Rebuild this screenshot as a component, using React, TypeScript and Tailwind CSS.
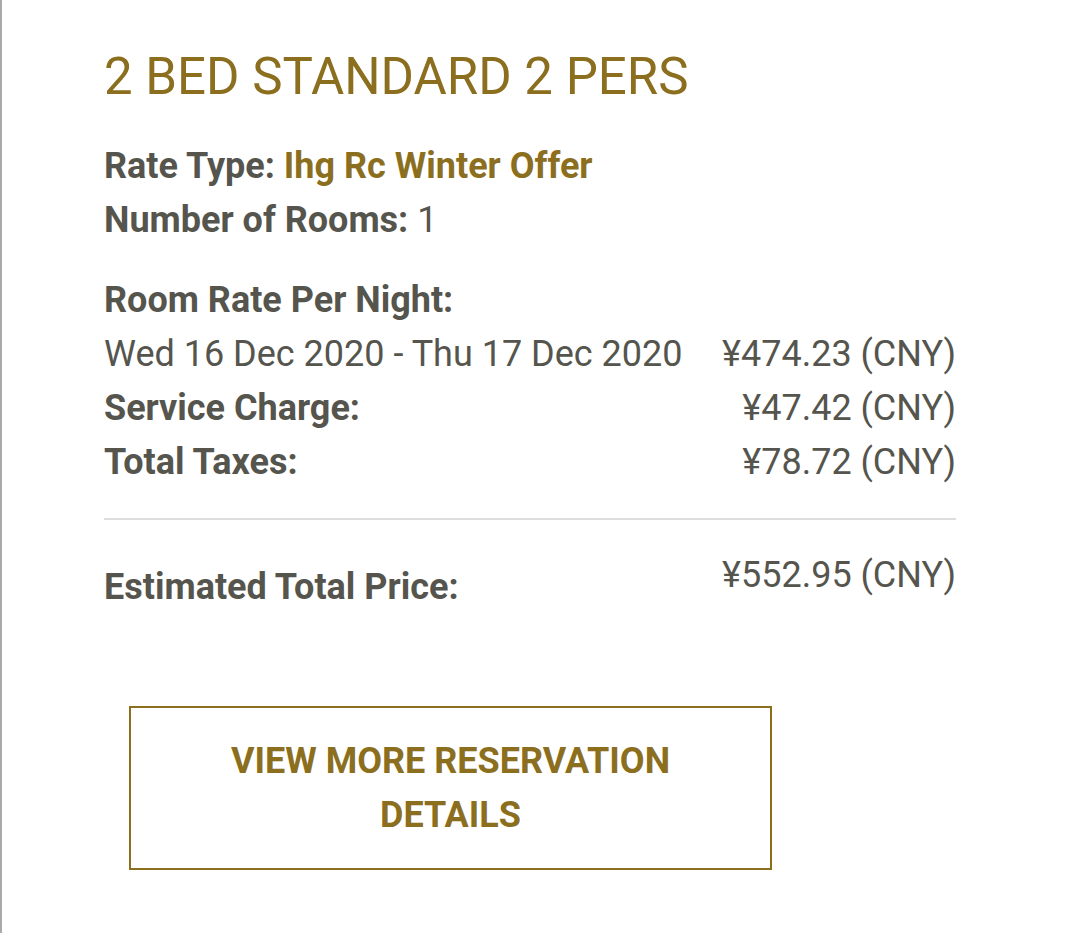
const rows = [
  { label: "Service Charge:", value: "¥47.42 (CNY)" },
  { label: "Total Taxes:", value: "¥78.72 (CNY)" },
];

const App = () => {
  return (
    <div className="w-[1080px] h-[933px] bg-white border-l-2 border-[#a9a9a9] overflow-hidden font-['Roboto',sans-serif] text-[#55554e]">
      <div className="ml-[102px] w-[852px] pt-[47px]">
        <h1 className="text-[51px] leading-[60px] text-[#8b6f1f] font-normal">2 BED STANDARD 2 PERS</h1>

        <div className="mt-[32px] text-[36px] leading-[54px]">
          <p>
            <span className="font-bold">Rate Type: </span>
            <span className="font-bold text-[#8b6f1f]">Ihg Rc Winter Offer</span>
          </p>
          <p>
            <span className="font-bold">Number of Rooms: </span>1
          </p>
        </div>

        <div className="mt-[26px] text-[36px] leading-[54px]">
          <p className="font-bold">Room Rate Per Night:</p>
          <div className="flex justify-between">
            <span>Wed 16 Dec 2020 - Thu 17 Dec 2020</span>
            <span>¥474.23 (CNY)</span>
          </div>
          {rows.map((r) => (
            <div key={r.label} className="flex justify-between">
              <span className="font-bold">{r.label}</span>
              <span>{r.value}</span>
            </div>
          ))}
        </div>

        <div className="mt-[29px] h-[2px] bg-[#dddddd]" />

        <div className="mt-[28px] flex justify-between items-start text-[36px] leading-[54px]">
          <span className="font-bold mt-[12px]">Estimated Total Price:</span>
          <span>¥552.95 (CNY)</span>
        </div>

        <button className="mt-[92px] ml-[25px] w-[643px] h-[164px] border-2 border-[#8b6f1f] flex items-center justify-center text-[36px] leading-[54px] font-bold text-[#8b6f1f] uppercase">
          <span className="block w-[480px] text-center">View more reservation details</span>
        </button>
      </div>
    </div>
  );
};

export default App;
